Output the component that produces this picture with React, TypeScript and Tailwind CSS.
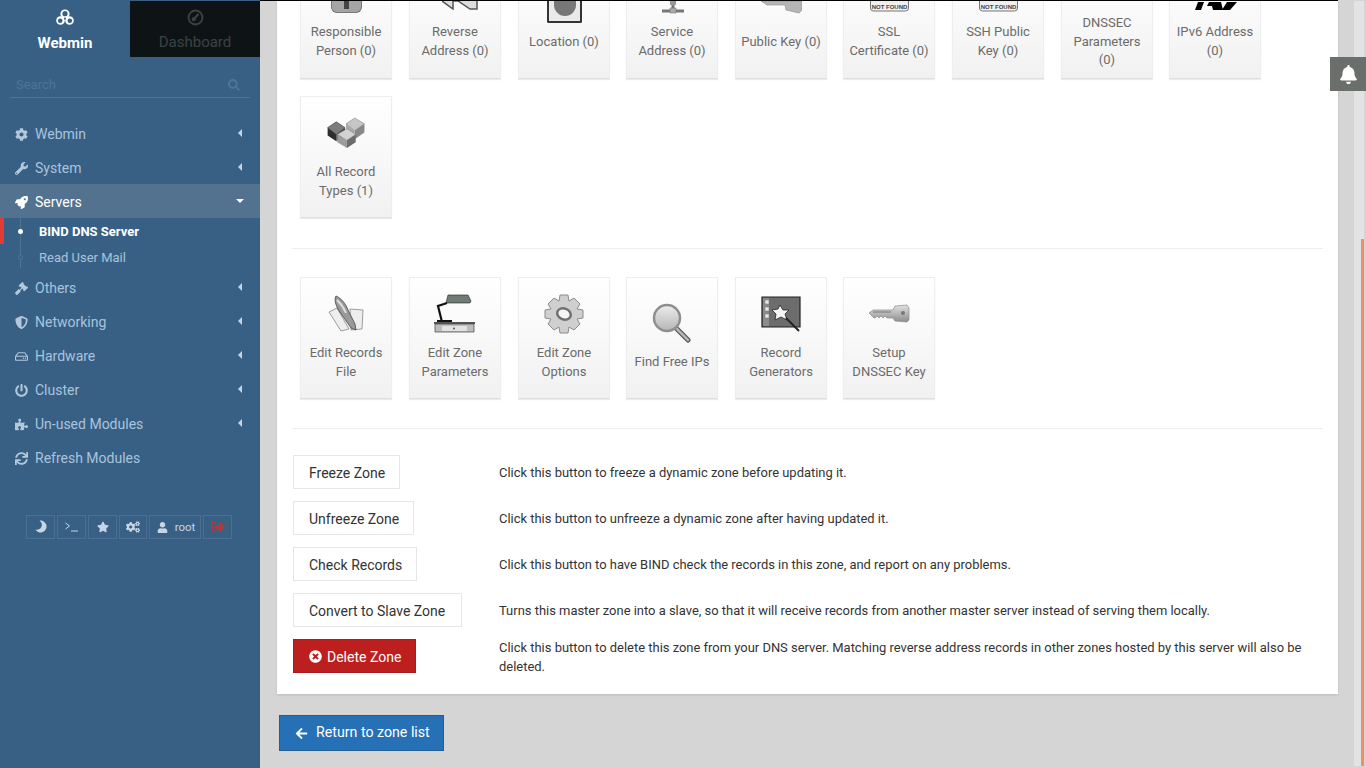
import {
  FaArrowLeft, FaBell, FaCog, FaCogs, FaGavel, FaPowerOff, FaPuzzlePiece, FaRegHdd, FaRocket, FaSearch,
  FaShieldAlt, FaSignOutAlt, FaStar, FaSync, FaMoon, FaTimesCircle, FaUser, FaWrench,
} from "react-icons/fa";
import { ReactNode } from "react";

const roboto = "font-['Roboto','Liberation_Sans',sans-serif]";

const menu = [
  { label: "Webmin", icon: <FaCog /> },
  { label: "System", icon: <FaWrench /> },
  { label: "Servers", icon: <FaRocket />, open: true },
];
const menu2 = [
  { label: "Others", icon: <FaGavel /> },
  { label: "Networking", icon: <FaShieldAlt /> },
  { label: "Hardware", icon: <FaRegHdd /> },
  { label: "Cluster", icon: <FaPowerOff /> },
  { label: "Un-used Modules", icon: <FaPuzzlePiece /> },
  { label: "Refresh Modules", icon: <FaSync />, noCaret: true },
];

function MenuRow({ label, icon, open, noCaret }: { label: string; icon: ReactNode; open?: boolean; noCaret?: boolean }) {
  return (
    <div className={`flex h-[34px] items-center pl-[15px] pr-[17px] text-[14px] ${open ? "bg-[#527290] text-white" : "text-[#a9c3dd]"}`}>
      <span className={`flex w-[20px] justify-start pt-[2px] text-[13px] ${open ? "text-white" : "text-[#b4c8dc]"}`}>{icon}</span>
      <span className="flex-1 pt-[2px]">{label}</span>
      {!noCaret &&
        (open ? (
          <span className="-mr-px h-0 w-0 border-x-[4px] border-t-[4px] border-x-transparent border-t-white" />
        ) : (
          <span className="mr-[1px] h-0 w-0 border-y-[4px] border-r-[4px] border-y-transparent border-r-[#c5d5e5]" />
        ))}
    </div>
  );
}

function SideBtn({ children, className }: { children: ReactNode; className: string }) {
  return (
    <div className={`flex h-[24px] items-center justify-center border border-[#4a6f92] ${className}`}>
      {children}
    </div>
  );
}

function Sidebar() {
  return (
    <aside className="flex h-[768px] w-[260px] shrink-0 flex-col bg-[#386084]">
      <div className="flex h-[57px] pt-px">
        <div className="flex w-[130px] flex-col items-center pt-[8px] text-white">
          <svg width="18" height="17" viewBox="0 0 18 17">
            <g fill="white">
              <circle cx="9" cy="5" r="4.600" />
              <circle cx="4.500" cy="11.500" r="4.300" />
              <circle cx="13.500" cy="11.500" r="4.300" />
            </g>
            <g fill="#386084">
              <circle cx="9" cy="4.700" r="2.600" />
              <circle cx="4.200" cy="11.800" r="2.300" />
              <circle cx="13.800" cy="11.800" r="2.300" />
            </g>
            <circle cx="9" cy="9.500" r="1" fill="#386084" />
          </svg>
          <span className="mt-[9px] text-[15px] font-bold leading-[17px]">Webmin</span>
        </div>
        <div className="flex w-[130px] flex-col items-center bg-[#0e1416] pt-[8px] text-[#3d4244]">
          <svg width="17" height="17" viewBox="0 0 17 17" fill="none" stroke="currentColor" strokeWidth="1.800">
            <circle cx="8.500" cy="8.500" r="7" />
            <path d="M6.500 10.500L11.500 5" strokeWidth="2" />
            <circle cx="6.800" cy="10.200" r="1.200" fill="currentColor" />
          </svg>
          <span className="mt-[8px] text-[15px] leading-[17px]">Dashboard</span>
        </div>
      </div>
      <div className="mx-[10px] mt-[16px] flex h-[25px] items-center justify-between border-b border-[#4e7497] pl-[6px] pr-[10px] text-[13px] text-[#4e7396]">
        <span>Search</span>
        <FaSearch className="text-[12px]" />
      </div>
      <nav className="mt-[18px]">
        {menu.map((m) => (
          <MenuRow key={m.label} {...m} />
        ))}
        <div className="relative h-[52px] text-[13px]">
          <span className="absolute left-0 top-0 h-[26px] w-[4px] bg-[#e53935]" />
          <span className="absolute bottom-[2px] left-[20px] top-0 w-px bg-[#4e7497]" />
          <div className="flex h-[26px] items-center pl-[18px] font-bold text-white">
            <span className="relative mr-[16px] h-[5px] w-[5px] rounded-full bg-white" />
            <span className="pt-[2px]">BIND DNS Server</span>
          </div>
          <div className="flex h-[26px] items-center pl-[18px] text-[#a9c3dd]">
            <span className="relative mr-[16px] h-[5px] w-[5px] rounded-full border border-[#4e7497] bg-[#386084]" />
            <span className="pt-[2px]">Read User Mail</span>
          </div>
        </div>
        {menu2.map((m) => (
          <MenuRow key={m.label} {...m} />
        ))}
      </nav>
      <div className="mt-[41px] flex gap-[2px] pl-[26px] text-[12px] text-[#c6d5e4]">
        <SideBtn className="w-[29px]"><FaMoon className="rotate-[-135deg]" /></SideBtn>
        <SideBtn className="w-[29px]">
          <svg width="13" height="10" viewBox="0 0 13 10" fill="none" stroke="currentColor" strokeWidth="1">
            <path d="M.5 1l4 3-4 3M6 9h7" />
          </svg>
        </SideBtn>
        <SideBtn className="w-[29px]"><FaStar /></SideBtn>
        <SideBtn className="w-[28px]"><FaCogs className="text-[14px]" /></SideBtn>
        <SideBtn className="w-[52px] gap-[7px] pl-[2px] text-[11.500px]">
          <FaUser className="text-[11px]" />
          <span className="pt-[2px]">root</span>
        </SideBtn>
        <SideBtn className="w-[29px] text-[#b03a3a]"><FaSignOutAlt className="text-[14px]" /></SideBtn>
      </div>
    </aside>
  );
}

/* the record type pictures are greyscale bitmaps in the real page, these are drawn approximations */
function Gray({ id, from, to }: { id: string; from: string; to: string }) {
  return (
    <linearGradient id={id} x1="0" y1="0" x2="0" y2="1">
      <stop offset="0" stopColor={from} />
      <stop offset="1" stopColor={to} />
    </linearGradient>
  );
}

function KeyIcon({ id }: { id: string }) {
  return (
    <svg width="42" height="20" viewBox="0 0 42 20">
      <defs><Gray id={id} from="#e2e2e2" to="#8d8d8d" /></defs>
      <path d="M1 9l4-3h20l2-4 12-1 2 3v12l-2 2-12-1-2-3h-6l-2-2-2 2-2-2-2 2-2-2-2 2H6z" fill={`url(#${id})`} stroke="#8a8a8a" strokeWidth=".7" />
      <circle cx="35" cy="9" r="2" fill="#777" />
      <path d="M5 8h18" stroke="#777" strokeWidth="1" />
    </svg>
  );
}

function CubesIcon() {
  return (
    <svg width="40" height="31" viewBox="0 0 40 32">
      <path d="M1 11L10 5l9 6-9 7z" fill="#7c7c7c" stroke="#333" strokeWidth=".6" />
      <path d="M1 11v8l9 6v-7z" fill="#2e2e2e" /><path d="M19 11v8l-9 6v-7z" fill="#444" />
      <path d="M20 7l9-6 10 6-10 7z" fill="#c6c6c6" stroke="#888" strokeWidth=".6" />
      <path d="M29 14v9l10-7V7z" fill="#888" /><path d="M20 7v8l9 8v-9z" fill="#aaa" />
      <path d="M11 18l10-6 9 6-9 6z" fill="#d2d2d2" stroke="#888" strokeWidth=".6" />
      <path d="M11 18v8l10 6v-8z" fill="#9c9c9c" /><path d="M30 18v8l-9 6v-8z" fill="#6d6d6d" />
    </svg>
  );
}

function QuillIcon() {
  return (
    <svg width="36" height="38" viewBox="0 0 36 38">
      <path d="M1 17l8-4 12 21-8 2z" fill="#eee" stroke="#777" strokeWidth=".7" />
      <path d="M22 14l13 1-1 19-11 1z" fill="#eee" stroke="#777" strokeWidth=".7" />
      <path d="M8 1c5 2 10 8 12 14l7 14 1 6-5-2-9-13C10 15 5 6 8 1z" fill="#9a9a9a" stroke="#444" strokeWidth=".8" />
      <path d="M9 5c3 3 7 8 9 13" stroke="#ddd" strokeWidth="2" fill="none" />
    </svg>
  );
}

function LampIcon() {
  return (
    <svg width="42" height="39" viewBox="0 0 42 39">
      <path d="M14 1h20l3 6-1 2H12z" fill="#6f7b74" stroke="#222" strokeWidth=".6" />
      <path d="M13 9L4 12l4 16" stroke="#111" strokeWidth="2.200" fill="none" />
      <path d="M3 26h15v2H3z" fill="#111" />
      <path d="M0 28h41v2H0z" fill="#555" />
      <path d="M1 30h39v8H1z" fill="#bdbdbd" stroke="#444" strokeWidth=".7" />
      <path d="M8 32h25v5H8z" fill="#e2e2e2" />
      <circle cx="20" cy="34.500" r="1" fill="#555" />
    </svg>
  );
}

function GearIcon() {
  return (
    <svg width="40" height="40" viewBox="-20 -20 40 40">
      <path d="M-4-19h8l1 6 5-3 6 6-3 5 6 1v8l-6 1 3 5-6 6-5-3-1 6h-8l-1-6-5 3-6-6 3-5-6-1v-8l6-1-3-5 6-6 5 3z" fill="#cfcfcf" stroke="#8b8b8b" strokeWidth="1" strokeLinejoin="round" />
      <ellipse cx="0" cy="0" rx="7" ry="5.500" fill="#f5f5f5" stroke="#707070" strokeWidth="2.500" transform="rotate(20)" />
    </svg>
  );
}

function MagnifierIcon() {
  return (
    <svg width="40" height="40" viewBox="0 0 40 40">
      <defs><Gray id="lens" from="#ededed" to="#b5b5b5" /></defs>
      <path d="M24 25l12 12" stroke="#555" strokeWidth="5" strokeLinecap="round" />
      <path d="M24 25l12 12" stroke="#b7b7b7" strokeWidth="2.500" strokeLinecap="round" />
      <circle cx="15" cy="15" r="13" fill="url(#lens)" stroke="#8f8f8f" strokeWidth="2.500" />
    </svg>
  );
}

function WandIcon() {
  return (
    <svg width="40" height="36" viewBox="0 0 40 36">
      <path d="M1 1h38v30H1z" fill="#6d6d6d" stroke="#222" strokeWidth="1.200" />
      <path d="M2 2h6v28H2z" fill="#8c8c8c" />
      <path d="M4 4h4v4H4zM4 11h4v4H4zM4 18h4v4H4z" fill="#e6e6e6" stroke="#777" strokeWidth=".5" />
      <path d="M19 9l3 5 6 0-4 4 2 6-6-3-6 3 1-6-4-4 6-1z" fill="#f4f4f4" stroke="#222" strokeWidth=".8" />
      <path d="M25 22l13 13" stroke="#222" strokeWidth="2" />
    </svg>
  );
}

function Tile({ lines, icon, pad = "pt-[14px]" }: { lines: string[]; icon?: ReactNode; pad?: string }) {
  return (
    <div className="flex h-[122px] w-[92px] flex-col items-center border border-[#eeeeee] border-b-[#dfdfdf] bg-gradient-to-b from-white to-[#f1f1f1] shadow-[0_1px_1px_rgba(0,0,0,0.08)]">
      <div className={`flex h-[57px] w-full shrink-0 items-center justify-center ${pad}`}>{icon}</div>
      <div className="flex h-[54px] flex-col items-center justify-center pt-px text-center text-[13px] leading-[18.200px] text-[#6b6b6b]">
        {lines.map((l) => (
          <span key={l} className="whitespace-nowrap">{l}</span>
        ))}
      </div>
    </div>
  );
}

/* top row is scrolled under the page edge, so only the bottom of each tile shows */
function CutTile({ lines, icon }: { lines: string[]; icon?: ReactNode }) {
  return (
    <div className="relative flex h-[78px] w-[92px] flex-col items-center overflow-hidden border-x border-b border-x-[#eeeeee] border-b-[#dfdfdf] bg-gradient-to-b from-[#fbfbfb] to-[#f1f1f1] shadow-[0_1px_1px_rgba(0,0,0,0.08)]">
      {icon}
      <div className="flex h-[78px] flex-col items-center justify-center pt-[5px] text-center text-[13px] leading-[18.570px] text-[#6b6b6b]">
        {lines.map((l) => (
          <span key={l} className="whitespace-nowrap">{l}</span>
        ))}
      </div>
    </div>
  );
}

function Peek({ children, left }: { children: ReactNode; left: string }) {
  return <div className={`absolute top-0 ${left}`}>{children}</div>;
}

function NotFound() {
  return (
    <svg width="39" height="11" viewBox="0 0 39 11">
      <path d="M.5 0v7q0 3 3 3h32q3 0 3-3V0" fill="#efefef" stroke="#777" strokeWidth="1" />
      <text x="19.500" y="7.500" textAnchor="middle" fontSize="6" fontWeight="700" fill="#444" fontFamily="Liberation Sans">NOT FOUND</text>
    </svg>
  );
}

const topRow = [
  { lines: ["Responsible", "Person (0)"], icon: <Peek left="left-[30px]"><div className="h-[12px] w-[31px] rounded-b-[6px] border border-t-0 border-[#777] bg-[#a5a5a5]"><div className="mx-auto h-[8px] w-[5px] bg-[#444]" /></div></Peek> },
  { lines: ["Reverse", "Address (0)"], icon: <Peek left="left-[32px]"><svg width="36" height="9" viewBox="0 0 36 9"><path d="M0 0l11 8V0h5l12 8h7V0" fill="#ddd" stroke="#555" strokeWidth="1.500" /></svg></Peek> },
  { lines: ["Location (0)"], icon: <Peek left="left-[28px]"><div className="h-[22px] w-[35px] rounded-b-[2px] border-x-2 border-b-2 border-[#333] bg-[#eaeaea]"><div className="mx-auto h-[15px] w-[22px] rounded-b-full bg-[#777]" /></div></Peek> },
  { lines: ["Service", "Address (0)"], icon: <Peek left="left-[34px]"><svg width="24" height="13" viewBox="0 0 24 13"><path d="M12 0v8M1 10h22" stroke="#777" strokeWidth="3" /><path d="M9 0h6v4H9z" fill="#999" /><path d="M9 7h6v5H9z" fill="#aaa" stroke="#777" strokeWidth=".6" /></svg></Peek> },
  { lines: ["Public Key (0)"], icon: <Peek left="left-[25px]"><svg width="41" height="13" viewBox="0 0 41 13"><path d="M0 0l6 4h18l1 5 13 3 3-3V0z" fill="#b5b5b5" stroke="#8a8a8a" strokeWidth=".6" /></svg></Peek> },
  { lines: ["SSL", "Certificate (0)"], icon: <Peek left="left-[26px]"><NotFound /></Peek> },
  { lines: ["SSH Public", "Key (0)"], icon: <Peek left="left-[26px]"><NotFound /></Peek> },
  { lines: ["DNSSEC", "Parameters", "(0)"] },
  { lines: ["IPv6 Address", "(0)"], icon: <Peek left="left-[25px]"><svg width="44" height="9" viewBox="0 0 44 9"><path d="M3 1h6L6 9H0zM14 1h12l2 8H18l-1-4h-5zM32 1h10l-7 8h-8z" fill="#000" /></svg></Peek> },
];

const buttons = [
  { label: "Freeze Zone", w: "w-[107px]", text: "Click this button to freeze a dynamic zone before updating it." },
  { label: "Unfreeze Zone", w: "w-[121px]", text: "Click this button to unfreeze a dynamic zone after having updated it." },
  { label: "Check Records", w: "w-[124px]", text: "Click this button to have BIND check the records in this zone, and report on any problems." },
  { label: "Convert to Slave Zone", w: "w-[169px]", text: "Turns this master zone into a slave, so that it will receive records from another master server instead of serving them locally." },
];

const cols = "grid grid-cols-[109px_109px_108px_109px_108px_109px_109px_108px_92px]";

export default function App() {
  return (
    <div className={`flex h-[768px] w-[1366px] overflow-hidden bg-[#d5d5d5] ${roboto}`}>
      <Sidebar />
      <main className="relative h-[768px] flex-1 pl-[17px]">
        {/* page scrollbar */}
        <div className="absolute left-[1094px] top-px h-[765px] w-[10px] bg-[#e3e3e3]" />
        <div className="absolute left-[1101px] top-[239px] h-[527px] w-[3px] bg-[#f08e66]" />
        <div className="-ml-[17px] h-px w-[1078px] bg-black" />
        <div className="h-[693px] w-[1061px] bg-white px-[15px] shadow-[0_1px_2px_rgba(0,0,0,0.12)]">
          <div className={`${cols} gap-y-[17px] pl-[8px]`}>
            {topRow.map((t) => (
              <CutTile key={t.lines[0]} {...t} />
            ))}
            <Tile lines={["All Record", "Types (1)"]} icon={<CubesIcon />} />
          </div>
          <hr className="mt-[30px] border-[#eeeeee]" />
          <div className={`${cols} mt-[28px] pl-[8px]`}>
            <Tile lines={["Edit Records", "File"]} icon={<QuillIcon />} />
            <Tile lines={["Edit Zone", "Parameters"]} icon={<LampIcon />} />
            <Tile lines={["Edit Zone", "Options"]} icon={<GearIcon />} />
            <Tile lines={["Find Free IPs"]} icon={<MagnifierIcon />} pad="pt-[33px]" />
            <Tile lines={["Record", "Generators"]} icon={<WandIcon />} />
            <Tile lines={["Setup", "DNSSEC Key"]} icon={<KeyIcon id="keyb" />} />
          </div>
          <hr className="mt-[29px] border-[#eeeeee]" />
          <div className="mt-[26px] flex flex-col gap-[12px] pl-px">
            {buttons.map((b) => (
              <div key={b.label} className="flex items-center">
                <div className="w-[206px]">
                  <div className={`flex h-[34px] items-center border border-[#e6e6e6] bg-white pl-[15px] pt-[3px] text-[14px] text-[#333333] ${b.w}`}>
                    {b.label}
                  </div>
                </div>
                <p className="pt-[2px] text-[12.950px] text-[#333333]">{b.text}</p>
              </div>
            ))}
            <div className="flex items-start">
              <div className="w-[206px]">
                <div className="flex h-[34px] w-[123px] items-center border border-[#a81c1c] bg-[#bd1e1e] pl-[15px] text-[14px] text-white">
                  <FaTimesCircle className="mr-[5px] text-[13px]" />
                  <span className="pt-[3px]">Delete Zone</span>
                </div>
              </div>
              <p className="-mt-px w-[815px] text-[12.950px] leading-[19px] text-[#333333]">
                Click this button to delete this zone from your DNS server. Matching reverse address records in other zones hosted by this server will also be deleted.
              </p>
            </div>
          </div>
        </div>
        <div className="relative ml-[2px] mt-[21px] flex h-[36px] w-[165px] items-center border border-[#205e94] bg-[#2670b5] pl-[15px] text-[14.200px] text-white">
          <FaArrowLeft className="mr-[8px] text-[13px]" />
          <span>Return to zone list</span>
        </div>
        {/* notification tab over the page scrollbar */}
        <div className="absolute left-[1070px] top-[57px] flex h-[34px] w-[36px] items-center justify-center bg-[#6a6f6c]">
          <FaBell className="text-[19px] text-white" />
        </div>
      </main>
    </div>
  );
}
